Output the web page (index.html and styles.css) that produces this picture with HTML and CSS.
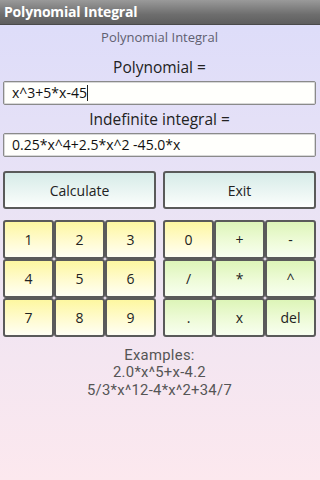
FILE: index.html
```html
<!DOCTYPE html>
<html>
<head>
<meta charset="utf-8">
<link rel="stylesheet" href="styles.css">
</head>
<body>
<div class="titlebar">Polynomial Integral</div>
<div class="content">
  <div class="subtitle">Polynomial Integral</div>
  <div class="label first">Polynomial =</div>
  <div class="field">x^3+5*x-45<span class="caret"></span></div>
  <div class="label">Indefinite integral =</div>
  <div class="field">0.25*x^4+2.5*x^2 -45.0*x</div>
  <div class="actions">
    <div class="btn action">Calculate</div>
    <div class="btn action">Exit</div>
  </div>
  <div class="pads">
    <div class="pad">
      <div class="btn key num">1</div>
      <div class="btn key num">2</div>
      <div class="btn key num">3</div>
      <div class="btn key num">4</div>
      <div class="btn key num">5</div>
      <div class="btn key num">6</div>
      <div class="btn key num">7</div>
      <div class="btn key num">8</div>
      <div class="btn key num">9</div>
    </div>
    <div class="pad">
      <div class="btn key num">0</div>
      <div class="btn key op">+</div>
      <div class="btn key op">-</div>
      <div class="btn key op">/</div>
      <div class="btn key op">*</div>
      <div class="btn key op">^</div>
      <div class="btn key op">.</div>
      <div class="btn key op">x</div>
      <div class="btn key op">del</div>
    </div>
  </div>
  <div class="examples">
    <div>Examples:</div>
    <div>2.0*x^5+x-4.2</div>
    <div>5/3*x^12-4*x^2+34/7</div>
  </div>
</div>
</body>
</html>
```
FILE: styles.css
```css
html, body {
  margin: 0;
  padding: 0;
  height: 480px;
}
body {
  font-family: "Open Sans", "DejaVu Sans", sans-serif;
  background: linear-gradient(to bottom, #dcdcfa 0%, #ece4f4 50%, #fce8ee 100%);
  overflow: hidden;
}
.titlebar {
  height: 25px;
  box-sizing: border-box;
  background: linear-gradient(to bottom, #9a9a9a 0%, #6e6e6e 60%, #5e5e5e 100%);
  border-bottom: 1px solid #4a4a4a;
  color: #fff;
  font-weight: bold;
  font-size: 14px;
  line-height: 24px;
  padding-left: 4px;
  letter-spacing: -0.2px;
}
.content {
  padding: 0 4px 0 3px;
  display: flex;
  flex-direction: column;
}
.subtitle {
  text-align: center;
  color: #606070;
  font-size: 13px;
  height: 24px;
  line-height: 24px;
}
.label {
  text-align: center;
  color: #222;
  font-size: 15.5px;
  height: 28px;
  line-height: 28px;
}
.label.first {
  height: 32px;
  line-height: 36px;
}
.field {
  height: 24px;
  box-sizing: border-box;
  background: #fffffc;
  border: 1px solid #8a8a8a;
  box-shadow: inset 0 0 0 1px #d8d8d8;
  border-radius: 2px;
  font-size: 14px;
  line-height: 22px;
  padding-left: 8px;
  color: #111;
}
.caret {
  display: inline-block;
  width: 1px;
  height: 16px;
  background: #222;
  vertical-align: -3px;
}
.actions {
  margin-top: 14px;
  display: grid;
  grid-template-columns: 1fr 1fr;
  column-gap: 7px;
}
.btn {
  box-sizing: border-box;
  border: 2px solid #5a5a5a;
  border-radius: 3px;
  display: flex;
  align-items: center;
  justify-content: center;
  color: #222;
  font-size: 14px;
}
.action {
  height: 38px;
  background: linear-gradient(to bottom, #d6ebe8 0%, #f4faf8 80%, #ffffff 100%);
}
.pads {
  margin-top: 11px;
  display: grid;
  grid-template-columns: 1fr 1fr;
  column-gap: 7px;
}
.pad {
  display: grid;
  grid-template-columns: repeat(3, 1fr);
  grid-auto-rows: 39px;
}
.key {
  font-size: 14px;
  border-width: 2px;
}
.num {
  background: linear-gradient(to bottom, #fdf7a0 0%, #fffbd0 55%, #fffff4 100%);
}
.op {
  background: linear-gradient(to bottom, #ddf5b8 0%, #eefbd8 55%, #f8fff0 100%);
}
.examples {
  margin-top: 10px;
  text-align: center;
  color: #555;
  font-family: Roboto, "Open Sans", sans-serif;
  font-size: 14.8px;
  line-height: 17.4px;
  letter-spacing: 0.3px;
}
```
